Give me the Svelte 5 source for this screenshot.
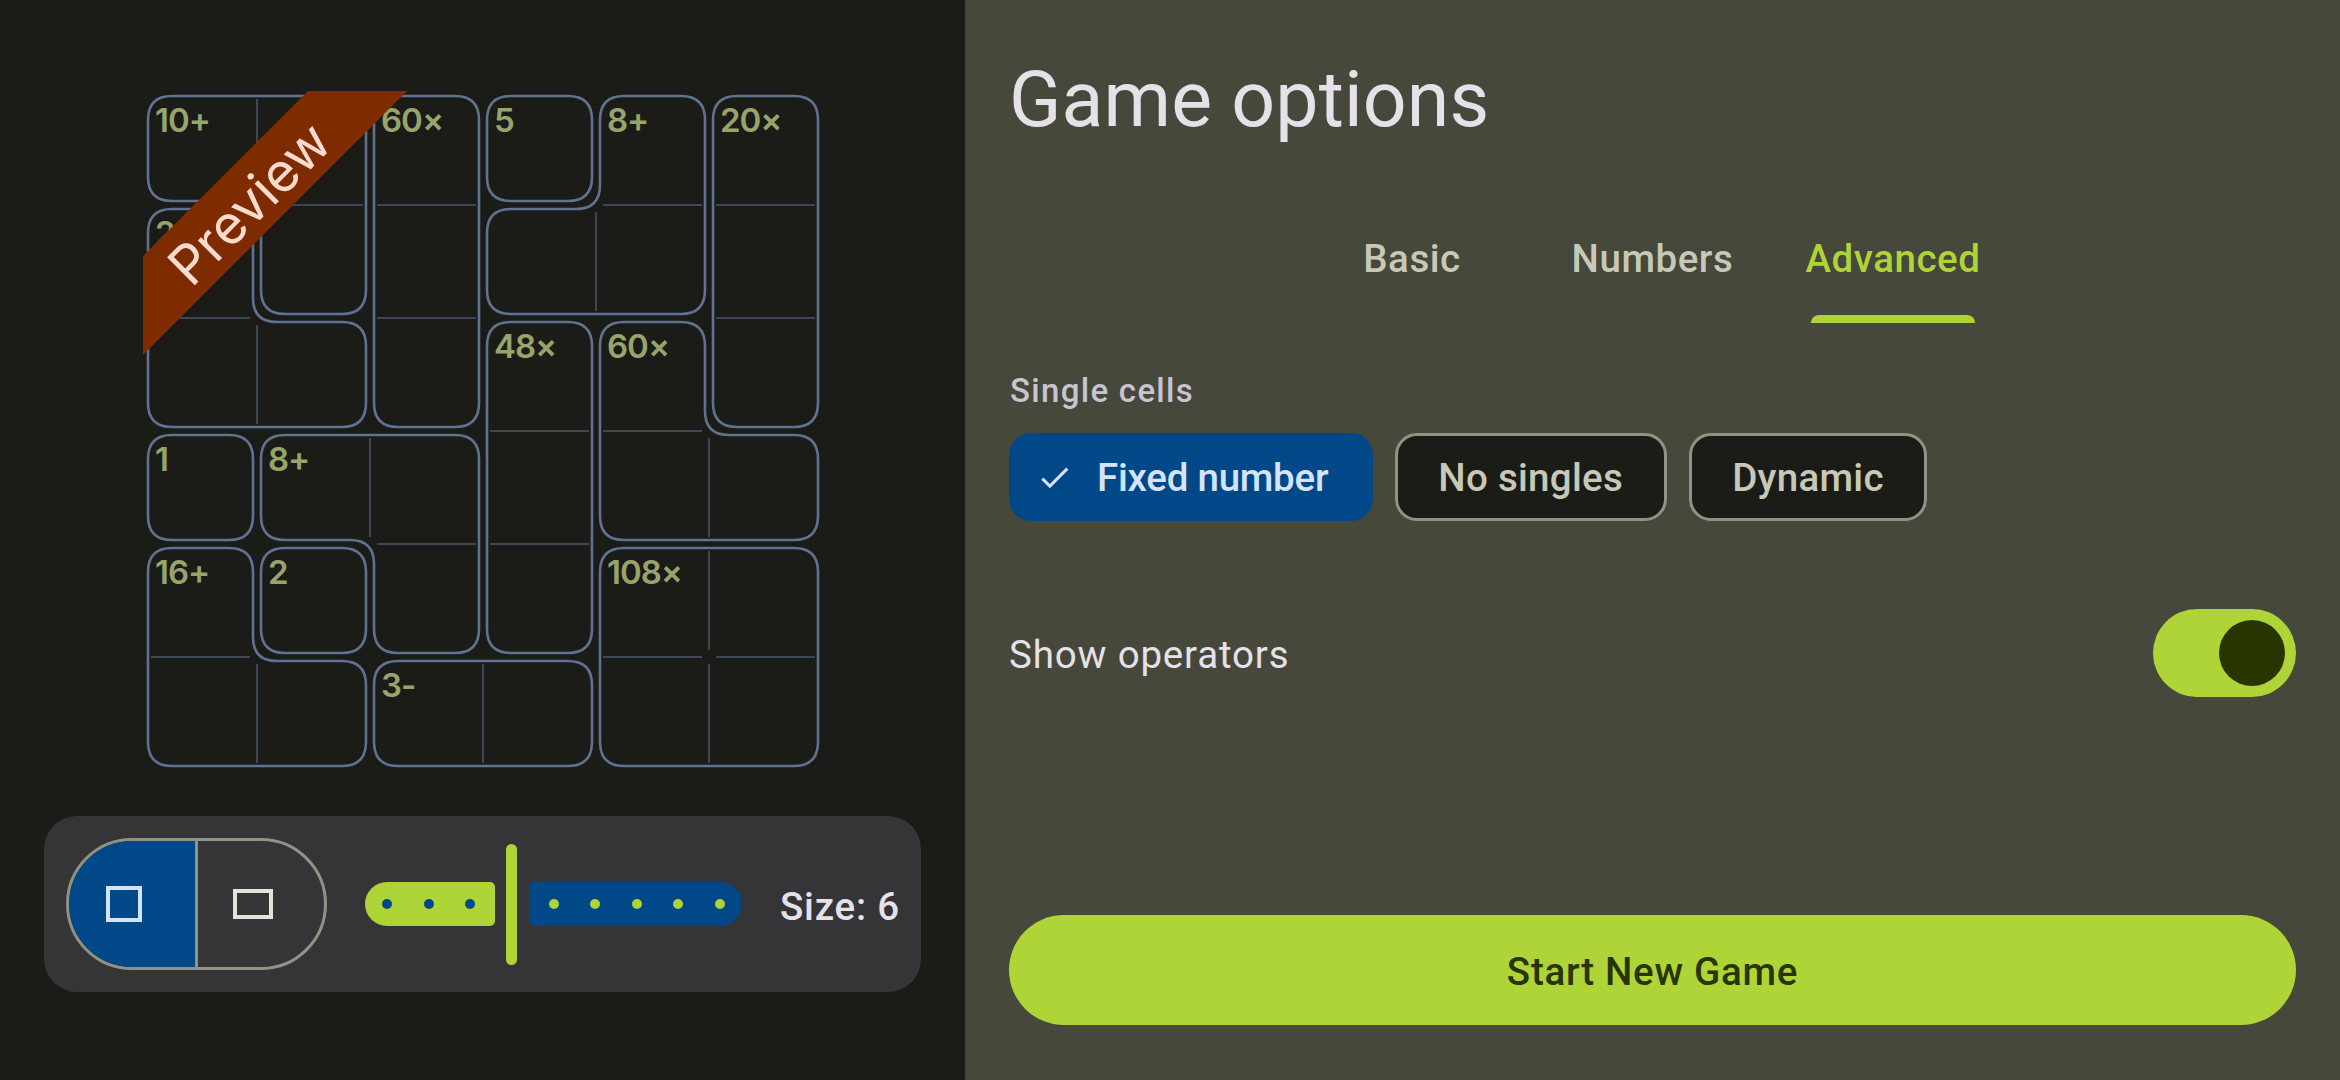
<script>
  // Board geometry: each cell is CELL wide and repeats every PITCH.
  const PITCH = 113;
  const CELL = 105;
  const OX = 148;
  const OY = 96;
  const CORNER = 24;

  // Cage outlines: corners as [column, side, row, side]; side 0 = left/top, 1 = right/bottom.
  const rect = (c0, r0, c1, r1) => [[c0, 0, r0, 0], [c1, 1, r0, 0], [c1, 1, r1, 1], [c0, 0, r1, 1]];
  const cages = [
    { clue: '10+', at: [0, 0], pts: [[0, 0, 0, 0], [1, 1, 0, 0], [1, 1, 1, 1], [1, 0, 1, 1], [1, 0, 0, 1], [0, 0, 0, 1]] },
    { clue: '2-', at: [0, 1], pts: [[0, 0, 1, 0], [0, 1, 1, 0], [0, 1, 2, 0], [1, 1, 2, 0], [1, 1, 2, 1], [0, 0, 2, 1]] },
    { clue: '60×', at: [2, 0], pts: rect(2, 0, 2, 2) },
    { clue: '5', at: [3, 0], pts: rect(3, 0, 3, 0) },
    { clue: '8+', at: [4, 0], pts: [[4, 0, 0, 0], [4, 1, 0, 0], [4, 1, 1, 1], [3, 0, 1, 1], [3, 0, 1, 0], [4, 0, 1, 0]] },
    { clue: '20×', at: [5, 0], pts: rect(5, 0, 5, 2) },
    { clue: '48×', at: [3, 2], pts: rect(3, 2, 3, 4) },
    { clue: '60×', at: [4, 2], pts: [[4, 0, 2, 0], [4, 1, 2, 0], [4, 1, 3, 0], [5, 1, 3, 0], [5, 1, 3, 1], [4, 0, 3, 1]] },
    { clue: '1', at: [0, 3], pts: rect(0, 3, 0, 3) },
    { clue: '8+', at: [1, 3], pts: [[1, 0, 3, 0], [2, 1, 3, 0], [2, 1, 4, 1], [2, 0, 4, 1], [2, 0, 3, 1], [1, 0, 3, 1]] },
    { clue: '16+', at: [0, 4], pts: [[0, 0, 4, 0], [0, 1, 4, 0], [0, 1, 5, 0], [1, 1, 5, 0], [1, 1, 5, 1], [0, 0, 5, 1]] },
    { clue: '2', at: [1, 4], pts: rect(1, 4, 1, 4) },
    { clue: '108×', at: [4, 4], pts: rect(4, 4, 5, 5) },
    { clue: '3-', at: [2, 5], pts: rect(2, 5, 3, 5) }
  ];

  function outline(pts) {
    const p = pts.map(([c, sx, r, sy]) => [OX + c * PITCH + sx * CELL, OY + r * PITCH + sy * CELL]);
    const n = p.length;
    const toward = (a, b) => {
      const d = Math.hypot(b[0] - a[0], b[1] - a[1]);
      return [a[0] + ((b[0] - a[0]) * CORNER) / d, a[1] + ((b[1] - a[1]) * CORNER) / d];
    };
    let d = '';
    for (let i = 0; i < n; i++) {
      const from = toward(p[i], p[(i + n - 1) % n]);
      const to = toward(p[i], p[(i + 1) % n]);
      d += `${i ? 'L' : 'M'}${from}Q${p[i]} ${to}`;
    }
    return d + 'Z';
  }

  // Dividers inside cages: vertical to the right of a cell, horizontal below it ([column, row]).
  const vertical = [[0, 0], [0, 2], [3, 1], [4, 3], [1, 3], [4, 4], [4, 5], [0, 5], [2, 5]];
  const horizontal = [[1, 0], [0, 1], [2, 0], [2, 1], [4, 0], [5, 0], [5, 1], [3, 2], [3, 3], [4, 2], [2, 3], [0, 4], [4, 4], [5, 4]];

  const tabs = ['Basic', 'Numbers', 'Advanced'];
  let activeTab = $state('Advanced');
  const chips = ['Fixed number', 'No singles', 'Dynamic'];
  let single = $state('Fixed number');
  let operators = $state(true);
</script>

<main class="screen">
  <section class="left">
    <svg class="board" viewBox="0 0 965 816">
      {#each cages as cage}
        <path class="cage" d={outline(cage.pts)} />
        <text class="clue" x={OX + cage.at[0] * PITCH + 7} y={OY + cage.at[1] * PITCH + 36.3}>{cage.clue}</text>
      {/each}
      {#each vertical as [c, r]}
        <path class="divider" d="M{OX + c * PITCH + 109} {OY + r * PITCH + 3}v99" />
      {/each}
      {#each horizontal as [c, r]}
        <path class="divider" d="M{OX + c * PITCH + 3} {OY + r * PITCH + 109}h99" />
      {/each}
      <path class="ribbon" d="M308 91H407L143 355V256Z" />
      <text class="ribbon-text" transform="translate(263 217) rotate(-45)" text-anchor="middle">Preview</text>
    </svg>

    <div class="sizebar">
      <div class="shape">
        <button class="half on" aria-label="Square">
          <svg width="36" height="36" viewBox="0 0 36 36"><rect x="2" y="2" width="32" height="32" /></svg>
        </button>
        <button class="half" aria-label="Rectangle">
          <svg width="40" height="30" viewBox="0 0 40 30"><rect x="2" y="2" width="36" height="26" /></svg>
        </button>
      </div>
      <div class="slider">
        <div class="track filled"><i></i><i></i><i></i></div>
        <div class="thumb"></div>
        <div class="track rest"><i></i><i></i><i></i><i></i><i></i></div>
      </div>
      <span class="size">Size: 6</span>
    </div>
  </section>

  <section class="right">
    <h1>Game options</h1>
    <nav>
      {#each tabs as tab}
        <button class="tab" class:active={tab === activeTab} onclick={() => (activeTab = tab)}>
          <span>{tab}</span><b></b>
        </button>
      {/each}
    </nav>
    <h2>Single cells</h2>
    <div class="chips">
      {#each chips as chip}
        <button class="chip" class:chosen={chip === single} onclick={() => (single = chip)}>
          {#if chip === single}
            <svg width="37" height="37" viewBox="0 0 24 24"><path d="M9 16.17 4.83 12l-1.42 1.41L9 19 21 7l-1.41-1.41z" /></svg>
          {/if}
          <span>{chip}</span>
        </button>
      {/each}
    </div>
    <div class="option">
      <span>Show operators</span>
      <button class="switch" class:off={!operators} aria-label="Show operators" onclick={() => (operators = !operators)}><i></i></button>
    </div>
    <button class="start">Start New Game</button>
  </section>
</main>

<style>
  :global(body) { margin: 0; background: #1b1c17; }
  button { border: 0; padding: 0; margin: 0; font: inherit; color: inherit; background: none; letter-spacing: inherit; }
  h1, h2 { margin: 0; }
  .screen {
    display: flex;
    width: 2340px;
    height: 1080px;
    overflow: hidden;
    font: 500 38.5px/55px Roboto, sans-serif;
    letter-spacing: 0.3px;
  }
  .left { width: 965px; background: #1b1c17; display: flex; flex-direction: column; }
  .board { width: 965px; height: 816px; display: block; }
  .cage { fill: none; stroke: #60728f; stroke-width: 2.6; }
  .divider { fill: none; stroke: #3d4856; stroke-width: 2; }
  .clue { font: 600 33px Inter, sans-serif; letter-spacing: -1px; fill: #97a46b; }
  .ribbon { fill: #7f2b00; }
  .ribbon-text { font: 400 54px Inter, sans-serif; letter-spacing: 0; fill: #ffdbcf; }

  .sizebar {
    box-sizing: border-box;
    width: 877px;
    height: 176px;
    margin-left: 44px;
    padding: 0 22px;
    border-radius: 33px;
    background: #353437;
    display: flex;
    align-items: center;
  }
  .shape {
    box-sizing: border-box;
    width: 261px;
    height: 132px;
    border: 3px solid #909283;
    border-radius: 66px;
    display: flex;
    overflow: hidden;
  }
  .half { flex: 1; display: flex; align-items: center; justify-content: center; }
  .half svg { fill: none; stroke: #e3e3d8; stroke-width: 4; margin-right: 16px; }
  .half.on { background: #004887; border-right: 3px solid #909283; }
  .half.on svg { stroke: #d6e3ff; }
  .slider { display: flex; align-items: center; margin-left: 38px; }
  .track { box-sizing: border-box; height: 44px; display: flex; align-items: center; justify-content: space-between; }
  .track i { width: 10px; height: 10px; border-radius: 50%; }
  .filled { width: 130px; padding: 0 20px 0 17px; border-radius: 22px 5px 5px 22px; background: #afd438; }
  .filled i { background: #004887; }
  .thumb { width: 11px; height: 121px; border-radius: 6px; margin: 0 12.5px 0 10.5px; background: #afd438; }
  .rest { width: 213px; padding: 0 17px 0 19.5px; border-radius: 5px 22px 22px 5px; background: #004887; }
  .rest i { background: #afd438; }
  .size { margin: 0 -1px 0 auto; color: #e6e1e9; padding-top: 4px; letter-spacing: 0.8px; }

  .right {
    box-sizing: border-box;
    flex: 1;
    padding: 50px 44px 55px;
    background: #46483b;
    display: flex;
    flex-direction: column;
  }
  h1 { font-size: 77px; line-height: 100px; font-weight: 400; letter-spacing: 0.1px; color: #e6e1e9; }
  nav { display: flex; justify-content: center; margin-top: 41px; height: 132px; }
  .tab { width: 240.5px; display: flex; flex-direction: column; align-items: center; color: #c7c8b7; letter-spacing: 0.55px; }
  .tab span { padding-top: 40px; height: 84px; }
  .tab b { width: 164px; height: 8px; border-radius: 8px 8px 0 0; }
  .tab.active { color: #afd438; }
  .tab.active b { background: #afd438; }
  h2 { margin-top: 46px; padding-left: 1px; font-size: 33px; line-height: 44px; font-weight: 500; letter-spacing: 1.3px; color: #cac4d0; }
  .chips { display: flex; gap: 22px; margin-top: 20px; }
  .chip {
    box-sizing: border-box;
    height: 88px;
    padding: 0 40.5px;
    border: 3px solid #909283;
    border-radius: 22px;
    background: #1b1c17;
    color: #c7c8b7;
    display: flex;
    align-items: center;
  }
  .chip.chosen { background: #004887; border-color: #004887; color: #d6e3ff; padding: 0 41.5px 0 24px; letter-spacing: -0.24px; }
  .chip svg { fill: #d6e3ff; margin-right: 24px; }
  .option { display: flex; justify-content: space-between; align-items: center; margin-top: 88px; height: 88px; font-weight: 400; color: #e6e1e9; letter-spacing: 0.825px; }
  .option span { padding-top: 3px; }
  .switch { box-sizing: border-box; width: 143px; height: 88px; padding: 11px; border-radius: 44px; background: #afd438; display: flex; justify-content: flex-end; }
  .switch i { width: 66px; height: 66px; border-radius: 50%; background: #293500; }
  .switch.off { justify-content: flex-start; }
  .start { height: 110px; margin-top: auto; padding-top: 3px; box-sizing: border-box; border-radius: 55px; background: #afd438; color: #293500; letter-spacing: 0.73px; }
</style>
